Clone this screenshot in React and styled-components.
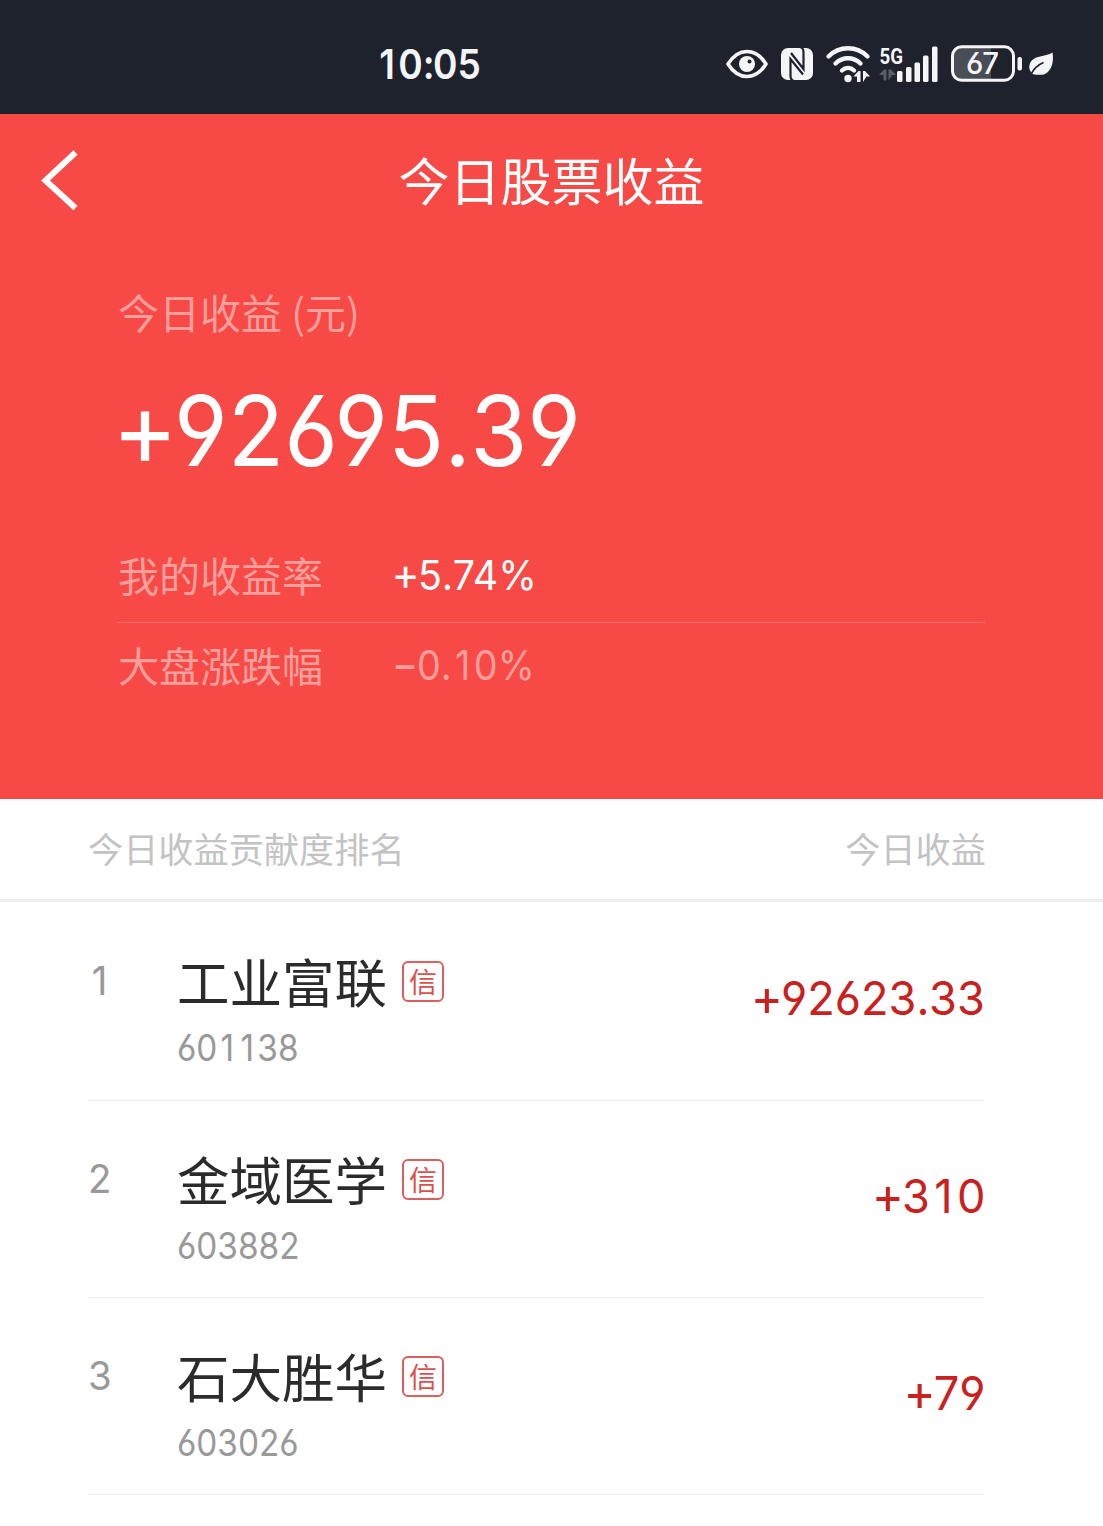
import * as React from 'react';
import styled, { createGlobalStyle } from 'styled-components';

const GlobalStyle = createGlobalStyle`
  html, body {
    margin: 0;
    background: #fff;
  }
  * {
    box-sizing: border-box;
  }
`;

const Page = styled.div`
  width: 1103px;
  height: 1526px;
  overflow: hidden;
  background: #fff;
  color: #2b2b2b;
  font-family: 'Noto Sans CJK SC', sans-serif;
  white-space: nowrap;
`;

// narrow figures with open six and nine
const FigureText = styled.span`
  display: inline-block;
  font-family: Inter, sans-serif;
  font-size: ${props => props.$size}px;
  font-weight: ${props => props.$weight || 400};
  font-feature-settings: 'cv03', 'cv04', 'calt' 0;
  line-height: 1;
  transform: scaleX(${props => props.$narrow || 0.96});
  transform-origin: ${props => props.$origin || 'left'} center;
`;
const Cell = styled.span`
  display: inline-block;
  width: ${props => (props.$mark ? 0.28 : 0.6)}em;
  text-align: center;
`;
const Sign = styled.span`
  display: inline-block;
  margin: 0 -0.04em 0 -0.06em;
  font-size: 1.08em;
  line-height: 0.8;
  vertical-align: -0.005em;
`;

const renderPart = (part, i) => {
  if (/^[+−]$/.test(part)) {
    return <Sign key={i}>{part}</Sign>;
  }
  if (/^[1.:]$/.test(part)) {
    return <Cell key={i} $mark={part !== '1'}>{part}</Cell>;
  }
  return part;
};

const Figure = ({ text, ...rest }) => (
  <FigureText {...rest}>{text.split(/([+−1.:])/).map(renderPart)}</FigureText>
);

const StatusBar = styled.div`
  display: flex;
  align-items: center;
  justify-content: space-between;
  height: 114px;
  padding: 14px 49px 0 376px;
  background: #1e222d;
  color: #f4f5f8;
`;
const StatusIcons = styled.div`
  display: flex;
  align-items: center;
`;
const StatusIcon = styled.svg`
  display: block;
  margin-left: ${props => props.$gap || 0}px;
`;

const Summary = styled.section`
  height: 685px;
  background: #f74a46;
  color: #fff;
`;
const NavBar = styled.header`
  display: grid;
  grid-template-columns: 120px 1fr 120px;
  align-items: center;
  height: 132px;
`;
const BackButton = styled.button`
  display: flex;
  width: 60px;
  height: 80px;
  margin-left: 30px;
  padding: 0;
  border: 0;
  background: none;
  color: #fff;
`;
const Title = styled.h1`
  margin: 0;
  padding-bottom: 2px;
  font-size: 51px;
  font-weight: 400;
  line-height: 60px;
  text-align: center;
`;
const SummaryBody = styled.div`
  padding: 40px 118px 0;
`;
const Label = styled.div`
  font-size: 41px;
  line-height: 50px;
  color: #ff9f9b;
`;
const Total = styled.div`
  display: flex;
  align-items: center;
  height: 190px;
  padding-bottom: 2px;
`;
const Rate = styled.div`
  display: grid;
  grid-template-columns: 276px 1fr;
  align-items: center;
  height: ${props => props.$height}px;
  padding-top: ${props => (props.$line ? '2px' : '0')};
  border-bottom: ${props => (props.$line ? '1px solid #fa6f6b' : '0')};
  color: ${props => (props.$faded ? '#ff9f9b' : '#fff')};

  & > ${Label} {
    padding-bottom: 3px;
  }
`;
const RateValue = styled.div`
  display: flex;
  align-items: center;
`;

const ListHead = styled.div`
  display: flex;
  align-items: center;
  justify-content: space-between;
  height: 103px;
  padding: 0 117px 4px 88px;
  border-bottom: 3px solid #ededed;
  font-size: 35.2px;
  color: #c3c3c3;
`;
const List = styled.div`
  padding: 1px 118px 0 88px;
`;
const Row = styled.div`
  display: grid;
  grid-template-columns: 89px 1fr auto;
  height: 197px;
  border-bottom: 1px solid #eee;

  &:first-child {
    height: 198px;
  }
`;
const Rank = styled.div`
  padding-top: 58px;
  color: #999;
`;
const Stock = styled.div`
  padding-top: 45px;
`;
const NameLine = styled.div`
  display: flex;
  align-items: center;
  height: 66px;
`;
const Name = styled.span`
  padding-bottom: 3px;
  font-size: 52.5px;
  line-height: 66px;
`;
const Badge = styled.span`
  display: flex;
  align-items: center;
  justify-content: center;
  width: 42px;
  height: 41px;
  margin-left: 15px;
  border: 2px solid #d9605d;
  border-radius: 6px;
  font-size: 28px;
  line-height: 38px;
  color: #d9504d;
`;
const Code = styled.div`
  margin-top: 15px;
  color: #999;
`;
const Amount = styled.div`
  padding-top: 71px;
  color: #c9211e;
`;

const stocks = [
  { rank: '1', name: '工业富联', code: '601138', amount: '+92623.33' },
  { rank: '2', name: '金域医学', code: '603882', amount: '+310' },
  { rank: '3', name: '石大胜华', code: '603026', amount: '+79' },
];

const EyeIcon = () => (
  <StatusIcon width="44" height="40" viewBox="0 0 44 40" fill="none">
    <path
      d="M3 20C8 12 14 7.500 22 7.500s14 4.500 19 12.500c-5 8-11 12.500-19 12.500S8 28 3 20Z"
      stroke="currentColor"
      strokeWidth="3.6"
      strokeLinejoin="round"
    />
    <circle cx="22" cy="20" r="8" fill="currentColor" />
    <circle cx="24.5" cy="17.5" r="2" fill="#1e222d" />
  </StatusIcon>
);

const NfcIcon = () => (
  <StatusIcon $gap={11} width="34" height="40" viewBox="0 0 34 40" fill="none">
    <rect x="1" y="4" width="32" height="32" rx="7" fill="currentColor" />
    <g stroke="#1e222d" strokeWidth="2.200">
      <path d="M14 37q-3.500-1-3.500-5V15l12.500 15.500" />
      <path d="M20 3q3.500 1 3.500 5v17L11 9" />
    </g>
  </StatusIcon>
);

const WifiIcon = () => (
  <StatusIcon $gap={11} width="46" height="40" viewBox="0 0 46 40" fill="none">
    <g stroke="currentColor" strokeWidth="4.4" strokeLinecap="round">
      <path d="M3.5 12.5C14 1.500 32 1.500 42.500 12.500" />
      <path d="M10.500 19.500C17.500 12.500 28.500 12.500 35.500 19.500" />
      <path d="M17 26.500c3.500-3.300 8.500-3.300 12 0" />
    </g>
    <circle cx="23" cy="34.500" r="3.700" fill="currentColor" />
    <path d="M28.500 32.500l5-5.500h2v11H32v-5.500zM38 27h2l5 5.500h-3.500L38 38z" fill="currentColor" />
  </StatusIcon>
);

const SignalIcon = () => (
  <StatusIcon $gap={8} width="60" height="40" viewBox="0 0 60 40" fill="currentColor">
    <text x="0.500" y="19.500" fontFamily="Roboto, sans-serif" fontSize="22" fontWeight="700" textLength="23.500" lengthAdjust="spacingAndGlyphs">
      5G
    </text>
    <path d="M0 31l5-5.500h2.500v11h-3V31zM9.500 25.500h2.500l5 5.500h-4.500v1l-3 4.500z" fill="#595d67" />
    <rect x="18" y="27" width="5.500" height="11" rx="1.500" />
    <rect x="27" y="23" width="5.500" height="15" rx="1.500" />
    <rect x="35.500" y="18.500" width="5.500" height="19.500" rx="1.500" />
    <rect x="44" y="11.500" width="5.500" height="26.500" rx="1.500" />
    <rect x="53" y="2.500" width="5.500" height="35.500" rx="1.500" />
  </StatusIcon>
);

const BatteryIcon = () => (
  <StatusIcon $gap={10} width="74" height="40" viewBox="0 0 74 40" fill="none">
    <path d="M9 4h33v32H9q-6 0-6-6V10q0-6 6-6Z" fill="#494d55" />
    <rect x="3.500" y="2.800" width="61" height="33.400" rx="9" stroke="currentColor" strokeWidth="3" />
    <rect x="68.500" y="13" width="4.500" height="13.500" rx="2" fill="currentColor" />
    <text
      x="17"
      y="30"
      fill="currentColor"
      fontFamily="Inter, sans-serif"
      fontSize="30"
      fontWeight="550"
      textLength="33"
      lengthAdjust="spacingAndGlyphs"
      style={{ fontFeatureSettings: "'cv03'" }}
    >
      67
    </text>
  </StatusIcon>
);

const LeafIcon = () => (
  <StatusIcon $gap={5} width="26" height="40" viewBox="0 0 26 40" fill="none">
    <path d="M24.500 8.500C26 17 24 26.500 17 30c-3 1.300-7 .8-10.500.5C5 31 1.500 27 1.300 24 1 19 4 15 9 13.300 15 11.500 20 11.500 24.500 8.500Z" fill="currentColor" />
    <path d="M3 30.500C5.500 25 9.500 21 15.500 18.500" stroke="#1e222d" strokeWidth="1.800" />
  </StatusIcon>
);

const BackIcon = () => (
  <svg width="60" height="80" viewBox="0 0 60 80" fill="none">
    <path d="M45.500 12.500L15.500 40.500l30 27.500" stroke="currentColor" strokeWidth="6" />
  </svg>
);

export default class App extends React.Component {
  render () {
    return (
      <Page>
        <GlobalStyle />
        <StatusBar>
          <Figure $size={41} $weight={600} $narrow={0.905} text="10:05" />
          <StatusIcons>
            <EyeIcon />
            <NfcIcon />
            <WifiIcon />
            <SignalIcon />
            <BatteryIcon />
            <LeafIcon />
          </StatusIcons>
        </StatusBar>

        <Summary>
          <NavBar>
            <BackButton aria-label="返回"><BackIcon /></BackButton>
            <Title>今日股票收益</Title>
          </NavBar>
          <SummaryBody>
            <Label>今日收益 (元)</Label>
            <Total><Figure $size={97} $weight={380} $narrow={0.953} text="+92695.39" /></Total>
            <Rate $height={97} $line>
              <Label>我的收益率</Label>
              <RateValue><Figure $size={41} text="+5.74%" /></RateValue>
            </Rate>
            <Rate $height={84} $faded>
              <Label>大盘涨跌幅</Label>
              <RateValue><Figure $size={41} $narrow={0.92} text="−0.10%" /></RateValue>
            </Rate>
          </SummaryBody>
        </Summary>

        <ListHead>
          <span>今日收益贡献度排名</span>
          <span>今日收益</span>
        </ListHead>
        <List>
          {stocks.map(({ rank, name, code, amount }) => (
            <Row key={code}>
              <Rank><Figure $size={40} $weight={370} text={rank} /></Rank>
              <Stock>
                <NameLine>
                  <Name>{name}</Name>
                  <Badge>信</Badge>
                </NameLine>
                <Code><Figure $size={37} $weight={370} $narrow={0.9} text={code} /></Code>
              </Stock>
              <Amount><Figure $size={47} $weight={380} $origin="right" text={amount} /></Amount>
            </Row>
          ))}
        </List>
      </Page>
    );
  }
}
